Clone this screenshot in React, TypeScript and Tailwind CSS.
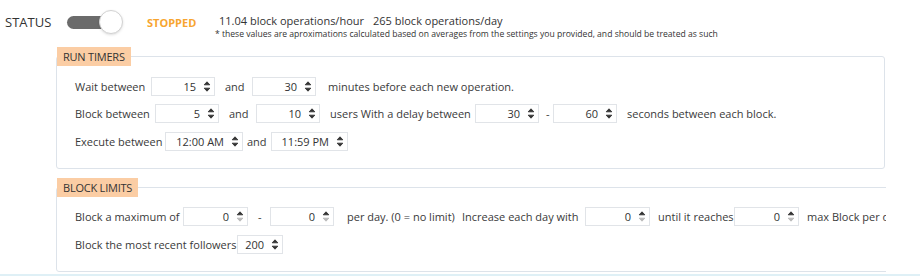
import React from 'react';

const Arrows: React.FC<{ downDisabled?: boolean }> = ({ downDisabled }) => {
  const down = downDisabled ? '#b8b8b8' : '#333';
  return (
    <svg width="8" height="13" viewBox="0 0 8 13" className="shrink-0">
      <polygon points="1.2,4.8 4,1.8 6.8,4.8" fill="#333" stroke="#333" strokeWidth="0.9" strokeLinejoin="round" />
      <polygon points="1.2,8.2 4,11.2 6.8,8.2" fill={down} stroke={down} strokeWidth="0.9" strokeLinejoin="round" />
    </svg>
  );
};

const Spin: React.FC<{ value: string; w: string; downDisabled?: boolean }> = ({ value, w, downDisabled }) => (
  <div className={`${w} h-[19px] shrink-0 flex items-center justify-end border border-[#e1e4e8] bg-white pr-[3px]`}>
    <span className="text-[#333]">{value}</span>
    <span className="ml-[7px] flex">
      <Arrows downDisabled={downDisabled} />
    </span>
  </div>
);

const Panel: React.FC<{ title: string; className?: string; children: React.ReactNode }> = ({ title, className, children }) => (
  <fieldset className={`border border-[#dde3ea] rounded-[3px] ${className ?? ''}`}>
    <legend className="h-[19px] bg-[#fbcda4] pl-[6px] pr-[6px] leading-[19px] text-[11px] text-[#333] tracking-[-0.02em]">
      {title}
    </legend>
    {children}
  </fieldset>
);

export default function App() {
  return (
    <div className="w-[920px] h-[277px] bg-white overflow-hidden font-['Open_Sans',sans-serif] text-[11px] text-[#3a3a3a]">
      {/* status header */}
      <div className="flex h-[47px] pl-[5px]">
        <div className="w-[62px] pt-[13px] text-[13px] leading-[18px] text-[#333]">STATUS</div>
        <div className="w-[80px] pt-[10px]">
          <div className="flex items-center h-[24px]">
            <div className="w-[41px] h-[13px] rounded-full bg-[#6b6b6b]" />
            <div className="-ml-[9px] w-[24px] h-[24px] rounded-full bg-white border border-[#d2d2d2] shadow-sm" />
          </div>
        </div>
        <div className="w-[72px] pt-[16px] leading-[14px] font-bold text-[#f7a530]">STOPPED</div>
        <div className="pt-[14px]">
          <div className="leading-[14px] text-[#333] whitespace-nowrap">
            11.04 block operations/hour<span className="ml-[9px]">265 block operations/day</span>
          </div>
          <div className="mt-[1px] -ml-[4px] leading-[10px] text-[8.6px] text-[#333] whitespace-nowrap">
            * these values are aproximations calculated based on averages from the settings you provided, and should be treated as such
          </div>
        </div>
      </div>

      <div className="pl-[56px]">
        <Panel title="RUN TIMERS" className="w-[829px] pb-[17px]">
          <div className="pl-[18px] pt-[11px] leading-[19px]">
            <div className="flex items-center h-[19px]">
              <span className="w-[76px]">Wait between</span>
              <Spin value="15" w="w-[64px]" />
              <span className="ml-[10px] w-[27px]">and</span>
              <Spin value="30" w="w-[64px]" />
              <span className="ml-[12px]">minutes before each new operation.</span>
            </div>
            <div className="flex items-center h-[19px] mt-[8px]">
              <span className="w-[80px]">Block between</span>
              <Spin value="5" w="w-[64px]" />
              <span className="ml-[10px] w-[27px]">and</span>
              <Spin value="10" w="w-[64px]" />
              <span className="ml-[10px] w-[145px]">users With a delay between</span>
              <Spin value="30" w="w-[64px]" />
              <span className="ml-[7px] w-[7px]">-</span>
              <Spin value="60" w="w-[64px]" />
              <span className="ml-[10px]">seconds between each block.</span>
            </div>
            <div className="flex items-center h-[19px] mt-[9px]">
              <span className="w-[90px]">Execute between</span>
              <Spin value="12:00 AM" w="w-[78px]" />
              <span className="ml-[4px] w-[24px]">and</span>
              <Spin value="11:59 PM" w="w-[77px]" />
            </div>
          </div>
        </Panel>

        <div className="w-[830px] overflow-hidden mt-[9px]">
          <Panel title="BLOCK LIMITS" className="w-[900px] pb-[17px]">
            <div className="pl-[18px] pt-[10px] leading-[19px]">
              <div className="flex items-center h-[19px] whitespace-nowrap">
                <span className="w-[108px]">Block a maximum of</span>
                <Spin value="0" w="w-[65px]" downDisabled />
                <span className="ml-[10px] w-[12px]">-</span>
                <Spin value="0" w="w-[64px]" downDisabled />
                <span className="ml-[13px] w-[115px]">per day. (0 = no limit)</span>
                <span className="w-[123px]">Increase each day with</span>
                <Spin value="0" w="w-[65px]" downDisabled />
                <span className="ml-[8px] w-[76px]">until it reaches</span>
                <Spin value="0" w="w-[65px]" downDisabled />
                <span className="ml-[8px]">max Block per day</span>
              </div>
              <div className="flex items-center h-[19px] mt-[9px]">
                <span className="w-[162px]">Block the most recent followers</span>
                <Spin value="200" w="w-[46px]" />
              </div>
            </div>
          </Panel>
        </div>
      </div>

      <div className="mt-[2px] h-[2px] bg-[#dff0f6]" />
    </div>
  );
}
